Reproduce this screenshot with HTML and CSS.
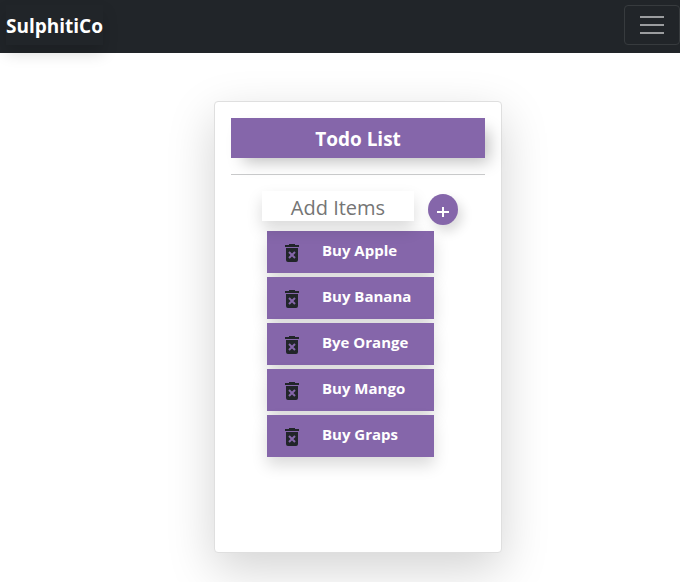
FILE: index.html
```html
<!DOCTYPE html>
<html lang="en">
<head>
<meta charset="utf-8">
<meta name="viewport" content="width=device-width, initial-scale=1">
<title>Todo List</title>
<link rel="stylesheet" href="styles.css">
</head>
<body>
<svg class="sprite" width="0" height="0" aria-hidden="true">
  <symbol id="trash" viewBox="0 0 14 18">
    <path d="M0 1h4V0h6v1h4v2H0zM1 4h12v12a2 2 0 0 1-2 2H3a2 2 0 0 1-2-2z"/>
    <path class="cross" d="M4 8l6 6M10 8l-6 6"/>
  </symbol>
</svg>
<nav class="navbar">
  <a class="brand" href="#">SulphitiCo</a>
  <button class="toggler" type="button" aria-label="Toggle navigation">
    <svg width="24" height="18" viewBox="0 0 24 18" aria-hidden="true"><path d="M0 1h24M0 9h24M0 17h24"/></svg>
  </button>
</nav>
<main class="page">
  <section class="card">
    <h1 class="title">Todo List</h1>
    <hr class="divider">
    <form class="add">
      <input class="add-input" type="text" placeholder="Add Items" aria-label="Add Items">
      <button class="add-button" type="button" aria-label="Add">
        <svg width="12" height="12" viewBox="0 0 12 12" aria-hidden="true"><path d="M6 1v10M0 6h12"/></svg>
      </button>
    </form>
    <ul class="items">
      <li class="item"><button class="delete" type="button" aria-label="Delete"><svg width="14" height="18"><use href="#trash"/></svg></button><span class="label">Buy Apple</span></li>
      <li class="item"><button class="delete" type="button" aria-label="Delete"><svg width="14" height="18"><use href="#trash"/></svg></button><span class="label">Buy Banana</span></li>
      <li class="item"><button class="delete" type="button" aria-label="Delete"><svg width="14" height="18"><use href="#trash"/></svg></button><span class="label">Bye Orange</span></li>
      <li class="item"><button class="delete" type="button" aria-label="Delete"><svg width="14" height="18"><use href="#trash"/></svg></button><span class="label">Buy Mango</span></li>
      <li class="item"><button class="delete" type="button" aria-label="Delete"><svg width="14" height="18"><use href="#trash"/></svg></button><span class="label">Buy Graps</span></li>
    </ul>
  </section>
</main>
</body>
</html>
```
FILE: styles.css
```css
* {
  box-sizing: border-box;
}

body {
  margin: 0;
  background: #fff;
  color: #212529;
  font-family: "Segoe UI", "Open Sans", "Noto Sans", sans-serif;
}

.sprite {
  display: block;
}

.navbar {
  display: flex;
  justify-content: space-between;
  align-items: flex-start;
  padding: 5px 0 8px 6px;
  background: #212529;
}

.brand {
  padding: 6px 0 4px;
  color: #fff;
  font-size: 19px;
  font-weight: 700;
  line-height: 30px;
  text-decoration: none;
  box-shadow: 0 8px 16px rgba(0, 0, 0, .15);
}

.toggler {
  display: flex;
  align-items: center;
  justify-content: center;
  width: 56px;
  height: 40px;
  padding: 0;
  border: 1px solid #373b3e;
  border-radius: 4px;
  background: transparent;
}

.toggler path {
  fill: none;
  stroke: #9b9d9f;
  stroke-width: 2;
}

.page {
  padding: 48px 0 29px 36px;
}

.card {
  width: 288px;
  min-height: 452px;
  margin: 0 auto;
  padding: 16px;
  border: 1px solid #dfdfdf;
  border-radius: 4px;
  background: #fff;
  box-shadow: 0 16px 48px rgba(0, 0, 0, .175);
}

.title {
  margin: 0;
  padding: 7px 0 5px;
  background: #8566aa;
  color: #fff;
  font-size: 19px;
  font-weight: 700;
  line-height: 28px;
  text-align: center;
  box-shadow: 8px 8px 16px -4px rgba(0, 0, 0, .25);
}

.divider {
  height: 1px;
  margin: 16px 0;
  border: 0;
  background: #c8c9ca;
}

.add {
  display: flex;
  position: relative;
  gap: 14px;
  margin: 0 0 6px 31px;
}

.add-input {
  width: 152px;
  height: 30px;
  padding: 2px 0 0;
  border: 0;
  background: #fff;
  font: 20px "Segoe UI", "Open Sans", "Noto Sans", sans-serif;
  text-align: center;
  box-shadow: 0 8px 16px rgba(0, 0, 0, .15);
}

.add-input::placeholder {
  color: #757575;
}

.add-button {
  display: flex;
  align-items: center;
  justify-content: center;
  width: 30px;
  height: 31px;
  margin-top: 3px;
  padding: 4px 0 0;
  border: 0;
  border-radius: 50%;
  background: #8566aa;
  box-shadow: 4px 6px 12px rgba(0, 0, 0, .15);
}

.add-button path {
  fill: none;
  stroke: #fff;
  stroke-width: 2;
}

.items {
  display: grid;
  gap: 4px;
  width: 167px;
  margin: 0 0 0 36px;
  padding: 0;
  list-style: none;
}

.item {
  display: flex;
  gap: 23px;
  height: 42px;
  padding-left: 18px;
  background: #8566aa;
  box-shadow: 0 8px 16px rgba(0, 0, 0, .15);
}

.delete {
  display: flex;
  align-items: flex-start;
  padding: 13px 0 0;
  border: 0;
  background: transparent;
  fill: #212529;
}

.cross {
  fill: none;
  stroke: #8566aa;
  stroke-width: 2;
}

.label {
  color: #fff;
  font-size: 15px;
  font-weight: 700;
  line-height: 38px;
  white-space: nowrap;
}
```
